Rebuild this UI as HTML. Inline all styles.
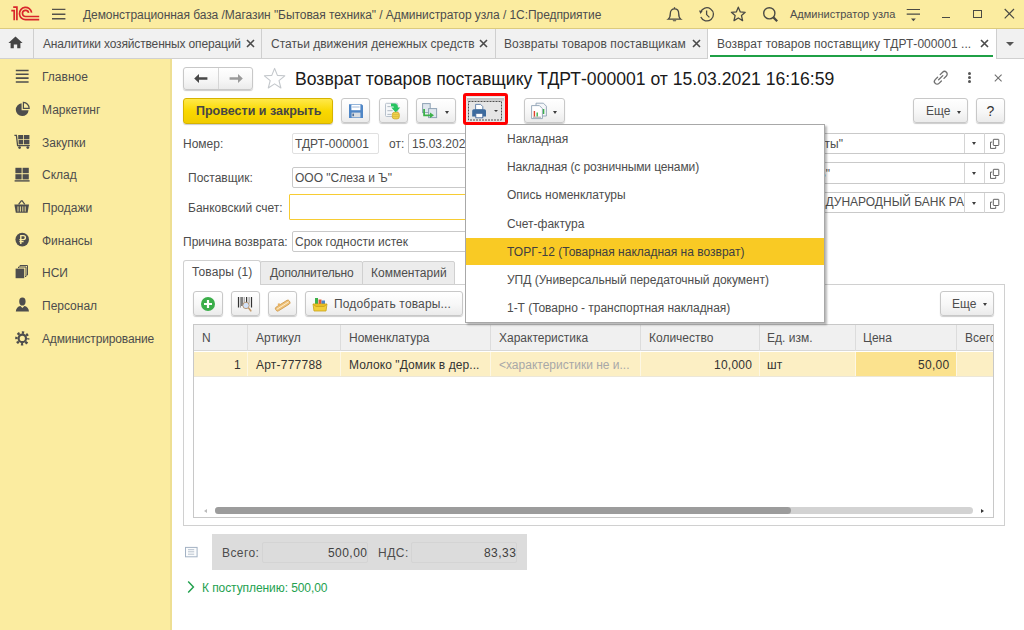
<!DOCTYPE html>
<html><head><meta charset="utf-8">
<style>
*{box-sizing:border-box;margin:0;padding:0}
html,body{width:1024px;height:630px;overflow:hidden;background:#fff;font-family:"Liberation Sans",sans-serif;color:#4d4d4d;font-size:12px}
.a{position:absolute}
.t{position:absolute;white-space:nowrap;line-height:1}
#top{left:0;top:0;width:1024px;height:28px;background:#fbeca0}
#topline{left:0;top:28px;width:1024px;height:1px;background:#dccb7e}
#tabs{left:0;top:29px;width:1024px;height:29px;background:#f1f1f1}
#tabsline{left:0;top:58px;width:1024px;height:1px;background:#d0d0d0}
#side{left:0;top:59px;width:170px;height:571px;background:#fbeca0}
#sideline{left:170px;top:59px;width:2px;height:571px;background:#eedf93}
.vsep{position:absolute;width:1px;background:#cfcfcf}
.btn{position:absolute;border:1px solid #c8c8c8;border-radius:3px;background:linear-gradient(#fff,#f7f7f7 55%,#ebebeb);box-shadow:0 1px 1px rgba(0,0,0,.2)}
.fld{position:absolute;border:1px solid #c9c9c9;border-radius:2px;background:#fff}
.dd{position:absolute;width:0;height:0;border-left:2.5px solid transparent;border-right:2.5px solid transparent;border-top:3px solid #3d3d3d}
.x{position:absolute}
</style></head>
<body>
<div id="top" class="a"></div>
<div id="topline" class="a"></div>
<div id="tabs" class="a"></div>
<div id="tabsline" class="a"></div>
<div id="side" class="a"></div>
<div id="sideline" class="a"></div>

<!-- ============ top bar ============ -->
<svg class="a" style="left:0;top:0" width="44" height="28" viewBox="0 0 44 28">
 <g fill="none" stroke="#d9262b" stroke-width="1.7">
  <path d="M11.3 10.6 H14.2 V20.2"/>
  <path d="M13.2 7.1 H16.9 V20.2"/>
  <path d="M31.6 12.6 A6.1 6.1 0 1 0 25.8 19.6 H39.2"/>
  <path d="M28.6 12.8 A3.1 3.1 0 1 0 25.8 16.5 H39.2"/>
 </g>
</svg>
<svg class="a" style="left:50px;top:6px" width="18" height="16" viewBox="0 0 18 16">
 <g stroke="#55524a" stroke-width="1.4"><path d="M2 3.4H15.4M2 8.3H15.4M2 12.7H15.4"/></g>
</svg>
<div class="t" style="left:83px;top:9px;font-size:12px;color:#4d4d4d;letter-spacing:-0.061px">Демонстрационная база /Магазин "Бытовая техника" / Администратор узла / 1С:Предприятие</div>

<!-- bell -->
<svg class="a" style="left:666px;top:6px" width="17" height="17" viewBox="0 0 17 17">
 <g fill="none" stroke="#4a4a44" stroke-width="1.3">
  <path d="M2.2 13.2 C3.8 12 4.3 10.5 4.3 7.6 C4.3 4.6 6 2.8 8.5 2.8 C11 2.8 12.7 4.6 12.7 7.6 C12.7 10.5 13.2 12 14.8 13.2 Z"/>
  <path d="M8.5 1.2 V2.8"/>
 </g>
 <path d="M6.6 14.3 H10.4 L9.8 15.3 H7.2Z" fill="#4a4a44"/>
</svg>
<!-- history -->
<svg class="a" style="left:698px;top:6px" width="17" height="17" viewBox="0 0 17 17">
 <g fill="none" stroke="#4a4a44" stroke-width="1.3">
  <path d="M2.6 6.2 A6.6 6.6 0 1 1 2.8 11"/>
  <path d="M8.6 4.6 V8.6 L11.4 11.4"/>
 </g>
 <path d="M1 4.4 L4.6 5 L2.4 8Z" fill="#4a4a44"/>
</svg>
<!-- star -->
<svg class="a" style="left:730px;top:6px" width="17" height="17" viewBox="0 0 17 17">
 <path d="M8.3 1.2 L10.3 5.9 L15.2 6.3 L11.5 9.6 L12.6 14.6 L8.3 12 L4 14.6 L5.1 9.6 L1.4 6.3 L6.3 5.9Z" fill="none" stroke="#4a4a44" stroke-width="1.3" stroke-linejoin="round"/>
</svg>
<!-- search -->
<svg class="a" style="left:762px;top:6px" width="17" height="17" viewBox="0 0 17 17">
 <circle cx="7.3" cy="7.3" r="5.6" fill="none" stroke="#4a4a44" stroke-width="1.4"/>
 <path d="M11.4 11.4 L15.2 15.2" stroke="#4a4a44" stroke-width="2.2"/>
</svg>
<div class="t" style="left:790px;top:9px;font-size:11px;color:#4d4d4d">Администратор узла</div>
<!-- filter -->
<svg class="a" style="left:905px;top:7px" width="17" height="16" viewBox="0 0 17 16">
 <g stroke="#4a4a44" stroke-width="1.2"><path d="M1.7 2.5H15M1.7 7.1H15"/></g>
 <path d="M6 11.6 H10.8 L8.4 14.2Z" fill="#4a4a44"/>
</svg>
<div class="a" style="left:942px;top:17px;width:8px;height:1.2px;background:#4a4a44"></div>
<div class="a" style="left:973.2px;top:9.9px;width:8.9px;height:8.4px;border:1.2px solid #4a4a44"></div>
<svg class="a" style="left:1003px;top:8px" width="13" height="13" viewBox="0 0 13 13">
 <path d="M1.7 1 L11 10.3 M11 1 L1.7 10.3" stroke="#4a4a44" stroke-width="1.2"/>
</svg>

<!-- ============ tabs ============ -->
<svg class="a" style="left:8px;top:36px" width="16" height="13" viewBox="0 0 16 13">
 <path d="M7.5 0.6 L14.6 7 H12.4 V12.2 H9.2 V8.6 H5.8 V12.2 H2.6 V7 H0.4Z" fill="#454545"/>
</svg>
<div class="vsep" style="left:33px;top:29px;height:29px"></div>
<div class="t" style="left:43px;top:38px;font-size:12px;letter-spacing:-0.152px">Аналитики хозяйственных операций</div>
<svg class="x" style="left:246px;top:39px" width="9" height="9" viewBox="0 0 9 9"><path d="M1 1L8 8M8 1L1 8" stroke="#4a4a4a" stroke-width="1.6"/></svg>
<div class="vsep" style="left:261px;top:29px;height:29px"></div>
<div class="t" style="left:271px;top:38px;font-size:12px">Статьи движения денежных средств</div>
<svg class="x" style="left:479px;top:39px" width="9" height="9" viewBox="0 0 9 9"><path d="M1 1L8 8M8 1L1 8" stroke="#4a4a4a" stroke-width="1.6"/></svg>
<div class="vsep" style="left:495px;top:29px;height:29px"></div>
<div class="t" style="left:504px;top:38px;font-size:12px;letter-spacing:0.081px">Возвраты товаров поставщикам</div>
<svg class="x" style="left:692px;top:39px" width="9" height="9" viewBox="0 0 9 9"><path d="M1 1L8 8M8 1L1 8" stroke="#4a4a4a" stroke-width="1.6"/></svg>
<div class="a" style="left:707px;top:29px;width:290px;height:30px;background:#fff;border-left:1px solid #cfcfcf;border-right:1px solid #cfcfcf"></div>
<div class="a" style="left:710px;top:55px;width:283px;height:2px;background:#1fa046"></div>
<div class="t" style="left:717px;top:38px;font-size:12px;letter-spacing:0.041px">Возврат товаров поставщику ТДРТ-000001 ...</div>
<svg class="x" style="left:980px;top:39px" width="9" height="9" viewBox="0 0 9 9"><path d="M1 1L8 8M8 1L1 8" stroke="#4a4a4a" stroke-width="1.6"/></svg>
<div class="dd" style="left:1006px;top:42px;border-left-width:4.5px;border-right-width:4.5px;border-top-width:4.5px;border-top-color:#555"></div>

<!-- ============ sidebar ============ -->
<svg class="a" style="left:14px;top:68px" width="17" height="17" viewBox="0 0 17 17">
 <g stroke="#4d4d4d" stroke-width="1.6"><path d="M1.8 2.5H14.6M1.8 6.3H14.6M1.8 10.1H14.6M1.8 14H14.6"/></g>
</svg>
<svg class="a" style="left:14px;top:101px" width="17" height="17" viewBox="0 0 17 17">
 <path d="M7.6 2.3 A6.4 6.4 0 1 0 14.6 9.2 H7.6Z" fill="#4d4d4d"/>
 <path d="M9.4 1.4 V7.4 H15.2 A6.2 6.2 0 0 0 9.4 1.4Z" fill="none" stroke="#4d4d4d" stroke-width="1.2"/>
</svg>
<svg class="a" style="left:13px;top:133px" width="18" height="17" viewBox="0 0 18 17">
 <path d="M1.4 2.4 H3.4 L4.6 12.6 H16.8" fill="none" stroke="#4d4d4d" stroke-width="1.3"/>
 <g fill="#4d4d4d"><rect x="5.2" y="2" width="5" height="4.2"/><rect x="11" y="2" width="5.4" height="4.2"/><rect x="5.6" y="6.9" width="4.6" height="4.4"/><rect x="11" y="6.9" width="5.4" height="4.4"/>
 <circle cx="6.6" cy="14.6" r="1.4"/><circle cx="14.8" cy="14.6" r="1.4"/></g>
</svg>
<svg class="a" style="left:14px;top:166px" width="17" height="17" viewBox="0 0 17 17">
 <g fill="#4d4d4d"><rect x="1.4" y="1.8" width="6.2" height="5.4"/><rect x="8.6" y="1.8" width="6.2" height="5.4"/><rect x="1.4" y="8.2" width="6.2" height="5.2"/><rect x="8.6" y="8.2" width="6.2" height="5.2"/><rect x="0.6" y="14.2" width="15" height="1.4"/></g>
</svg>
<svg class="a" style="left:13px;top:198px" width="18" height="17" viewBox="0 0 18 17">
 <path d="M5.6 6.4 L8.6 2.4 M11.8 6.4 L8.8 2.4" stroke="#4d4d4d" stroke-width="1.2" fill="none"/>
 <path d="M1.4 6.6 H16 L14.6 14.8 H2.8Z" fill="#4d4d4d"/>
 <g stroke="#fbeca0" stroke-width="0.9"><path d="M5 8.4V13.6M7.4 8.4V13.6M9.8 8.4V13.6M12.2 8.4V13.6"/></g>
</svg>
<svg class="a" style="left:14px;top:231px" width="17" height="17" viewBox="0 0 17 17">
 <circle cx="8.2" cy="8.6" r="6.8" fill="#4d4d4d"/>
 <path d="M6.8 13 V4.6 H9.4 A2 2 0 0 1 9.4 8.6 H5.4 M5.4 10.6 H9.6" fill="none" stroke="#fbeca0" stroke-width="1.4"/>
</svg>
<svg class="a" style="left:14px;top:263px" width="17" height="17" viewBox="0 0 17 17">
 <g fill="none" stroke="#4d4d4d" stroke-width="1"><path d="M6 3.5 V2.5 H13.5 V12 H12.5"/><path d="M4.5 5 V4 H12 V13.5 H11"/></g>
 <rect x="1.6" y="5.6" width="8.6" height="9.6" fill="#4d4d4d"/>
</svg>
<svg class="a" style="left:14px;top:296px" width="17" height="17" viewBox="0 0 17 17">
 <path d="M8.4 1.6 C6.2 1.6 5.2 3 5.2 5.4 C5.2 8 6.4 9.6 8.4 9.6 C10.4 9.6 11.6 8 11.6 5.4 C11.6 3 10.6 1.6 8.4 1.6Z M1.8 15.4 C2.2 12 3.8 10.6 6.4 10 L8.4 12 L10.4 10 C13 10.6 14.6 12 15 15.4Z" fill="#4d4d4d"/>
</svg>
<svg class="a" style="left:14px;top:330px" width="17" height="17" viewBox="0 0 17 17">
 <circle cx="8.3" cy="8.4" r="5.9" fill="none" stroke="#4d4d4d" stroke-width="2.4" stroke-dasharray="2.3 2.33" stroke-dashoffset="1.15"/>
 <circle cx="8.3" cy="8.4" r="3.7" fill="none" stroke="#4d4d4d" stroke-width="2.2"/>
</svg>
<div class="t" style="left:42px;top:71px">Главное</div>
<div class="t" style="left:42px;top:104px">Маркетинг</div>
<div class="t" style="left:42px;top:137px">Закупки</div>
<div class="t" style="left:42px;top:169px">Склад</div>
<div class="t" style="left:42px;top:202px">Продажи</div>
<div class="t" style="left:42px;top:235px">Финансы</div>
<div class="t" style="left:42px;top:267px">НСИ</div>
<div class="t" style="left:42px;top:300px">Персонал</div>
<div class="t" style="left:42px;top:333px;letter-spacing:-0.144px">Администрирование</div>

<!-- ============ form header ============ -->
<div class="btn" style="left:183px;top:67px;width:70px;height:23px"></div>
<div class="a" style="left:218px;top:68px;width:1px;height:21px;background:#d6d6d6"></div>
<svg class="a" style="left:193px;top:72px" width="16" height="13" viewBox="0 0 16 13">
 <path d="M1.2 6.5 L6 2 V5.3 H14.4 V7.7 H6 V11Z" fill="#474747"/>
</svg>
<svg class="a" style="left:228px;top:72px" width="16" height="13" viewBox="0 0 16 13">
 <path d="M14.8 6.5 L10 2 V5.3 H1.6 V7.7 H10 V11Z" fill="#9a9a9a"/>
</svg>
<svg class="a" style="left:262px;top:67px" width="25" height="23" viewBox="0 0 25 23">
 <path d="M12.6 1.4 L15.4 8.4 L22.8 8.8 L17 13.6 L18.9 21 L12.6 16.9 L6.3 21 L8.2 13.6 L2.4 8.8 L9.8 8.4Z" fill="none" stroke="#c4c8cc" stroke-width="1.1" stroke-linejoin="round"/>
</svg>
<div class="t" style="left:295px;top:71px;font-size:17.6px;color:#1a1a1a">Возврат товаров поставщику ТДРТ-000001 от 15.03.2021 16:16:59</div>

<!-- link / dots / close -->
<svg class="a" style="left:932px;top:69px" width="18" height="18" viewBox="0 0 18 18">
 <g fill="none" stroke="#707070" stroke-width="1.3" stroke-linecap="round">
  <path d="M8.2 5.6 L10.6 3.2 A2.6 2.6 0 0 1 14.4 7 L12 9.4"/>
  <path d="M9.4 12 L7 14.4 A2.6 2.6 0 0 1 3.2 10.6 L5.6 8.2"/>
  <path d="M6.6 10.8 L10.8 6.6"/>
 </g>
</svg>
<div class="a" style="left:967.5px;top:72px;width:3px;height:3px;border-radius:50%;background:#555"></div>
<div class="a" style="left:967.5px;top:75.8px;width:3px;height:3px;border-radius:50%;background:#555"></div>
<div class="a" style="left:967.5px;top:79.6px;width:3px;height:3px;border-radius:50%;background:#555"></div>
<svg class="a" style="left:993px;top:73px" width="10" height="10" viewBox="0 0 10 10"><path d="M1.8 1.6L8.6 8.4M8.6 1.6L1.8 8.4" stroke="#707070" stroke-width="1.1"/></svg>

<!-- ============ toolbar ============ -->
<div class="a" style="left:183px;top:98px;width:150px;height:26px;border:1px solid #d6b300;border-radius:3px;background:linear-gradient(#ffe94a,#f9d800 50%,#f1cc00);box-shadow:0 1px 1px rgba(0,0,0,.2)"></div>
<div class="t" style="left:196px;top:105px;font-size:12.5px;font-weight:bold;color:#464646">Провести и закрыть</div>

<div class="btn" style="left:341px;top:98px;width:29px;height:25px"></div>
<svg class="a" style="left:348px;top:103px" width="16" height="16" viewBox="0 0 16 16">
 <path d="M1 1.2 H13.6 L15 2.6 V15 H1Z" fill="#4f86c6"/>
 <rect x="3.4" y="1.8" width="9" height="5.4" fill="#fff"/>
 <rect x="4.2" y="3.6" width="7.4" height="0.8" fill="#8aa8d0"/>
 <rect x="3.6" y="9.6" width="8.8" height="4.8" fill="#d9dde2"/>
 <rect x="4.4" y="10.6" width="1.6" height="2.6" fill="#4f6e96"/>
</svg>

<div class="btn" style="left:379px;top:98px;width:29px;height:25px"></div>
<svg class="a" style="left:384px;top:102px" width="19" height="18" viewBox="0 0 19 18">
 <rect x="1.5" y="1.3" width="12.2" height="13.2" rx="1" fill="#f6f8fa" stroke="#b7c1cc" stroke-width="1"/>
 <g stroke="#a8b2bc" stroke-width="0.9"><path d="M3.4 4.6H6.6M3.4 8.7H8.6M3.4 12.4H7.6"/></g>
 <path d="M7 1.6 H10.5 C12.6 1.6 13.8 2.9 13.8 5.2 V5.6 H16.2 L11.7 10.6 L7.3 5.6 H9.9 V5.4 C9.9 4.7 9.6 4.4 8.8 4.4 H7Z" fill="#27c460"/>
 <rect x="8.3" y="10.3" width="7" height="6.6" rx="2.2" fill="#efd24c" stroke="#cfa52c" stroke-width="0.8"/>
 <path d="M8.6 12.6H15M8.6 14.6H15" stroke="#d9b43a" stroke-width="0.7"/>
</svg>

<div class="btn" style="left:416px;top:98px;width:40px;height:25px"></div>
<svg class="a" style="left:421px;top:102px" width="19" height="18" viewBox="0 0 19 18">
 <rect x="1.6" y="1.6" width="7.6" height="9" fill="#dfe7ee" stroke="#8ea2b4" stroke-width="1"/>
 <rect x="7.6" y="6.6" width="8" height="9" fill="#dfe7ee" stroke="#8ea2b4" stroke-width="1"/>
 <path d="M4 7 V12.4 H9 V10.4 L13 13.2 L9 16 V14.2 H2.2 V7Z" fill="#3cb14a"/>
</svg>
<div class="dd" style="left:445px;top:110.5px"></div>

<!-- pressed print button with red highlight -->

<div class="btn" style="left:524px;top:98px;width:41px;height:25px"></div>
<svg class="a" style="left:530px;top:102px" width="18" height="18" viewBox="0 0 18 18">
 <path d="M6 1.2 H13.4 L16.4 4.2 V14 H6Z" fill="#f4f6f8" stroke="#8ea2b4" stroke-width="0.9"/>
 <path d="M1.6 3.6 H9.4 L12.4 6.6 V16.6 H1.6Z" fill="#fff" stroke="#8ea2b4" stroke-width="0.9"/>
 <g stroke-width="1.4"><path d="M4.4 14.6V9" stroke="#e0402a"/><path d="M7.2 14.6V10.6" stroke="#3cb14a"/><path d="M13.6 12V7" stroke="#3cb14a"/></g>
 <path d="M3 15.2 H11" stroke="#8a8a8a" stroke-width="0.8"/>
</svg>
<div class="dd" style="left:553px;top:110.5px"></div>

<div class="btn" style="left:913px;top:98px;width:55px;height:25px"></div>
<div class="t" style="left:926px;top:105px;font-size:12px">Еще</div>
<div class="dd" style="left:956.5px;top:110.5px"></div>
<div class="btn" style="left:976px;top:98px;width:29px;height:25px"></div>
<div class="t" style="left:986.5px;top:104px;font-size:14px;color:#333">?</div>

<!-- ============ fields ============ -->
<div class="t" style="left:183px;top:138px">Номер:</div>
<div class="fld" style="left:292px;top:133px;width:87px;height:21px;border-color:#e0e0e0"></div>
<div class="t" style="left:295px;top:138px">ТДРТ-000001</div>
<div class="t" style="left:389px;top:138px">от:</div>
<div class="fld" style="left:408px;top:133px;width:80px;height:21px"></div>
<div class="t" style="left:412px;top:138px">15.03.2021</div>

<div class="t" style="left:188px;top:172px">Поставщик:</div>
<div class="fld" style="left:292px;top:167px;width:200px;height:21px"></div>
<div class="t" style="left:295px;top:172px">ООО "Слеза и Ъ"</div>

<div class="t" style="left:188px;top:202px">Банковский счет:</div>
<div class="a" style="left:289px;top:194px;width:200px;height:26px;border:1.7px solid #f7cc33;border-radius:1px"></div>

<div class="t" style="left:183px;top:236px">Причина возврата:</div>
<div class="fld" style="left:292px;top:231px;width:200px;height:21px"></div>
<div class="t" style="left:295px;top:236px">Срок годности истек</div>

<!-- right side fields -->
<div class="fld" style="left:700px;top:133px;width:305px;height:21px;border-radius:3px"></div>
<div class="a" style="left:964.2px;top:133px;width:1px;height:20px;background:#d4d4d4"></div>
<div class="a" style="left:984px;top:133px;width:1px;height:20px;background:#d4d4d4"></div>
<div class="t" style="right:181px;top:138px">ООО "Бытовые продукты"</div>
<div class="fld" style="left:700px;top:162px;width:305px;height:22px;border-radius:3px"></div>
<div class="a" style="left:964.2px;top:163px;width:1px;height:20px;background:#d4d4d4"></div>
<div class="a" style="left:984px;top:163px;width:1px;height:20px;background:#d4d4d4"></div>
<div class="t" style="right:194px;top:168px">ООО "Слеза и Ъ"</div>
<div class="fld" style="left:700px;top:192px;width:305px;height:21px;border-radius:3px"></div>
<div class="a" style="left:964.2px;top:193px;width:1px;height:20px;background:#d4d4d4"></div>
<div class="a" style="left:984px;top:193px;width:1px;height:20px;background:#d4d4d4"></div>
<div class="a" style="left:701px;top:193px;width:262.5px;height:19px;overflow:hidden"><div class="t" style="left:124.5px;top:3px">ДУНАРОДНЫЙ БАНК РАЗВИТИЯ</div></div>
<div class="dd" style="left:972px;top:142.2px"></div>
<div class="dd" style="left:972px;top:172.2px"></div>
<div class="dd" style="left:972px;top:202.2px"></div>
<svg class="a" style="left:988px;top:137px" width="12" height="13" viewBox="0 0 12 13"><g fill="none" stroke="#505050" stroke-width="0.9"><rect x="5.3" y="2.3" width="5.5" height="6.2" rx="0.6"/><path d="M4.2 5.1H2.5V11.4H7.7V9.4"/></g></svg>
<svg class="a" style="left:988px;top:167px" width="12" height="13" viewBox="0 0 12 13"><g fill="none" stroke="#505050" stroke-width="0.9"><rect x="5.3" y="2.3" width="5.5" height="6.2" rx="0.6"/><path d="M4.2 5.1H2.5V11.4H7.7V9.4"/></g></svg>
<svg class="a" style="left:988px;top:197px" width="12" height="13" viewBox="0 0 12 13"><g fill="none" stroke="#505050" stroke-width="0.9"><rect x="5.3" y="2.3" width="5.5" height="6.2" rx="0.6"/><path d="M4.2 5.1H2.5V11.4H7.7V9.4"/></g></svg>

<!-- ============ tab panel ============ -->
<div class="a" style="left:183px;top:284px;width:822px;height:242px;border:1px solid #d0d0d0;border-top:none"></div>
<div class="a" style="left:260px;top:284px;width:745px;height:1px;background:#d0d0d0"></div>
<div class="a" style="left:183px;top:260px;width:78px;height:25px;border:1px solid #d0d0d0;border-bottom:none;border-radius:3px 3px 0 0;background:#fff"></div>
<div class="t" style="left:192px;top:266px;font-size:12px;letter-spacing:0.12px">Товары (1)</div>
<div class="a" style="left:260px;top:261px;width:103px;height:24px;border:1px solid #d0d0d0;border-radius:2px 2px 0 0;background:#ececec"></div>
<div class="t" style="left:270px;top:267px;letter-spacing:-0.225px">Дополнительно</div>
<div class="a" style="left:362px;top:261px;width:93px;height:24px;border:1px solid #d0d0d0;border-radius:2px 2px 0 0;background:#ececec"></div>
<div class="t" style="left:371px;top:267px">Комментарий</div>

<div class="btn" style="left:193px;top:291px;width:30px;height:25px"></div>
<svg class="a" style="left:200px;top:296px" width="16" height="16" viewBox="0 0 16 16">
 <circle cx="8" cy="8" r="7" fill="#3bae4a"/>
 <path d="M8 4 V12 M4 8 H12" stroke="#fff" stroke-width="2.2"/>
</svg>
<div class="btn" style="left:231px;top:291px;width:29px;height:25px"></div>
<svg class="a" style="left:236px;top:295px" width="18" height="17" viewBox="0 0 18 17">
 <g stroke-width="1.2"><path d="M2.5 2V12.6M6 2V11M10.6 2V8.5M15.5 2V12.6" stroke="#333"/><path d="M4.4 2V12.6M8.2 2V9.5M13.1 2V8.5" stroke="#888" stroke-width="0.9"/></g>
 <path d="M12.2 12.6 L14.8 15.8" stroke="#c49a6a" stroke-width="1.6" stroke-linecap="round"/>
 <circle cx="10" cy="10.4" r="3.2" fill="#d2e2f8" stroke="#b89a7a" stroke-width="1"/>
</svg>
<div class="btn" style="left:268px;top:291px;width:29px;height:25px"></div>
<svg class="a" style="left:273px;top:295px" width="18" height="17" viewBox="0 0 18 17">
 <g transform="translate(9.7 10.6) rotate(-32)">
  <rect x="-8" y="-2.2" width="16" height="4.4" rx="1.6" fill="#eec27a" stroke="#d09a48" stroke-width="0.8"/>
  <path d="M-7 0 H7" stroke="#fff3d8" stroke-width="0.8"/>
  <rect x="-3.6" y="-4" width="2" height="2" fill="#e8b060"/>
 </g>
</svg>
<div class="btn" style="left:305px;top:291px;width:158px;height:25px"></div>
<svg class="a" style="left:312px;top:296px" width="17" height="16" viewBox="0 0 17 16">
 <rect x="3" y="2" width="3" height="6" fill="#3cb14a"/>
 <rect x="6.5" y="3.5" width="3" height="5" fill="#e05a3a"/>
 <rect x="9.5" y="4.5" width="3.5" height="4" fill="#4f86c6"/>
 <path d="M1 8 H15 L14 15 H2Z" fill="#f2cf3a" stroke="#c9a21a" stroke-width="0.8"/>
 <path d="M1 8 L4 10.5 H12 L15 8" fill="#e7bd22" stroke="#c9a21a" stroke-width="0.8"/>
</svg>
<div class="t" style="left:334px;top:298px;letter-spacing:0.161px">Подобрать товары...</div>

<div class="btn" style="left:940px;top:291px;width:54px;height:25px"></div>
<div class="t" style="left:952px;top:298px">Еще</div>
<div class="dd" style="left:982.5px;top:303px"></div>

<!-- table -->
<div class="a" style="left:193px;top:324px;width:801px;height:194px;border:1px solid #c8c8c8;overflow:hidden">
 <div class="a" style="left:0;top:0;width:800px;height:26px;background:#f0f0f0;border-bottom:1px solid #d8d8d8"></div>
 <div class="a" style="left:0;top:27px;width:800px;height:24px;background:#fcefc4"></div>
 <div class="a" style="left:0;top:51px;width:800px;height:1px;background:#ece7d8"></div>
 <div class="a" style="left:662px;top:27px;width:100px;height:24px;background:#fbe28e"></div>
 <div class="vsep" style="left:53px;top:0;height:26px;background:#dcdcdc"></div>
 <div class="vsep" style="left:146px;top:0;height:26px;background:#dcdcdc"></div>
 <div class="vsep" style="left:296px;top:0;height:26px;background:#dcdcdc"></div>
 <div class="vsep" style="left:446px;top:0;height:26px;background:#dcdcdc"></div>
 <div class="vsep" style="left:565px;top:0;height:26px;background:#dcdcdc"></div>
 <div class="vsep" style="left:661px;top:0;height:26px;background:#dcdcdc"></div>
 <div class="vsep" style="left:762px;top:0;height:26px;background:#dcdcdc"></div>
 <div class="vsep" style="left:53px;top:27px;height:24px;background:#fdf7e4"></div>
 <div class="vsep" style="left:146px;top:27px;height:24px;background:#fdf7e4"></div>
 <div class="vsep" style="left:296px;top:27px;height:24px;background:#fdf7e4"></div>
 <div class="vsep" style="left:446px;top:27px;height:24px;background:#fdf7e4"></div>
 <div class="vsep" style="left:565px;top:27px;height:24px;background:#fdf7e4"></div>
 <div class="vsep" style="left:661px;top:27px;height:24px;background:#fdf7e4"></div>
 <div class="vsep" style="left:762px;top:27px;height:24px;background:#fdf7e4"></div>
 <div class="t" style="left:8px;top:7px">N</div>
 <div class="t" style="left:62px;top:7px">Артикул</div>
 <div class="t" style="left:155px;top:7px">Номенклатура</div>
 <div class="t" style="left:305px;top:7px">Характеристика</div>
 <div class="t" style="left:455px;top:7px">Количество</div>
 <div class="t" style="left:573px;top:7px">Ед. изм.</div>
 <div class="t" style="left:669px;top:7px">Цена</div>
 <div class="t" style="left:771px;top:7px">Всего</div>
 <div class="t" style="left:40px;top:34px;color:#333">1</div>
 <div class="t" style="left:62px;top:34px;color:#333;letter-spacing:0.222px">Арт-777788</div>
 <div class="t" style="left:155px;top:34px;color:#333;letter-spacing:0.09px">Молоко "Домик в дер...</div>
 <div class="t" style="left:305px;top:34px;color:#a8a8a8">&lt;характеристики не и...</div>
 <div class="t" style="left:520px;top:34px;color:#333;letter-spacing:0.25px">10,000</div>
 <div class="t" style="left:573px;top:34px;color:#333">шт</div>
 <div class="t" style="left:724px;top:34px;color:#333;letter-spacing:0.3px">50,00</div>
 <!-- scrollbar -->
 <div class="a" style="left:10px;top:184px;width:0;height:0;border-top:2px solid transparent;border-bottom:2px solid transparent;border-right:3.5px solid #bbb"></div>
 <div class="a" style="left:21px;top:182px;width:758px;height:7px;border-radius:4px;background:#d3d3d3"></div>
 <div class="a" style="left:21px;top:182px;width:576px;height:7px;border-radius:4px;background:#9c9c9c"></div>
 <div class="a" style="left:787px;top:184px;width:0;height:0;border-top:2px solid transparent;border-bottom:2px solid transparent;border-left:3.5px solid #333"></div>
</div>

<!-- ============ footer ============ -->
<svg class="a" style="left:184px;top:546px" width="14" height="12" viewBox="0 0 14 12">
 <rect x="1.5" y="1.4" width="11.6" height="9.4" fill="#fbfcfd" stroke="#a3b2c4" stroke-width="1"/>
 <g stroke="#b0bbc8" stroke-width="0.9"><path d="M4 3.7H10.2M4 5.8H10.2M4 8.2H10.2"/></g>
</svg>
<div class="a" style="left:212px;top:534px;width:315px;height:36px;background:#dcdcdc"></div>
<div class="t" style="left:222px;top:547px;letter-spacing:0.420px">Всего:</div>
<div class="a" style="left:262px;top:542px;width:106px;height:21px;border:1px solid #d4d4d4;border-radius:2px"></div>
<div class="t" style="left:328px;top:547px;color:#404040;letter-spacing:0.45px">500,00</div>
<div class="t" style="left:378px;top:547px;letter-spacing:0.500px">НДС:</div>
<div class="a" style="left:411px;top:542px;width:106px;height:21px;border:1px solid #d4d4d4;border-radius:2px"></div>
<div class="t" style="left:484px;top:547px;color:#404040;letter-spacing:0.45px">83,33</div>

<svg class="a" style="left:186px;top:580px" width="10" height="14" viewBox="0 0 10 14"><path d="M2.2 1.6 L7.4 7 L2.2 12.4" fill="none" stroke="#23a14f" stroke-width="1.5"/></svg>
<div class="t" style="left:202px;top:582px;color:#23a14f;font-size:12px;letter-spacing:-0.075px">К поступлению: 500,00</div>

<!-- ============ dropdown menu ============ -->
<div class="a" style="left:465px;top:123.5px;width:360px;height:199.5px;background:#fff;border:1px solid #a8a8a8;box-shadow:2px 2px 2px rgba(0,0,0,.28)"></div>
<div class="a" style="left:466px;top:237.5px;width:357.5px;height:27.5px;background:#f9ca24"></div>
<div class="t" style="left:507px;top:133px">Накладная</div>
<div class="t" style="left:507px;top:161px;letter-spacing:-0.107px">Накладная (с розничными ценами)</div>
<div class="t" style="left:507px;top:189px">Опись номенклатуры</div>
<div class="t" style="left:507px;top:218px">Счет-фактура</div>
<div class="t" style="left:507px;top:246px;color:#404040">ТОРГ-12 (Товарная накладная на возврат)</div>
<div class="t" style="left:507px;top:274px">УПД (Универсальный передаточный документ)</div>
<div class="t" style="left:507px;top:302px;letter-spacing:-0.041px">1-Т (Товарно - транспортная накладная)</div>

<!-- pressed print button with red highlight -->
<div class="a" style="left:463.3px;top:93px;width:44.6px;height:32.1px;border:3.6px solid #ff0000;border-radius:3px;background:#e5e5e5"></div>
<div class="a" style="left:467px;top:96.7px;width:37px;height:1px;background:#fafafa"></div>
<div class="a" style="left:467px;top:97.7px;width:37px;height:3px;background:linear-gradient(#bdbdbd,#d2d2d2)"></div>
<svg class="a" style="left:466px;top:99px" width="40" height="24"><rect x="2.5" y="2.5" width="33" height="18.5" fill="none" stroke="#505050" stroke-width="1" stroke-dasharray="2 1"/></svg>
<svg class="a" style="left:471px;top:103px" width="17" height="16" viewBox="0 0 17 16">
 <path d="M4.6 1.4 H9.6 L11.8 3.6 V7 H4.6Z" fill="#fff" stroke="#5a7aa4" stroke-width="0.9"/>
 <path d="M1.2 7.8 A1.6 1.6 0 0 1 2.8 6.3 H13.4 A1.6 1.6 0 0 1 15 7.8 V13.4 H1.2Z" fill="#3d6b9e"/>
 <rect x="4.8" y="10.3" width="7" height="4.5" fill="#fff" stroke="#44689a" stroke-width="0.9"/>
</svg>
<div class="dd" style="left:493.5px;top:110px;border-top-width:2.5px"></div>

</body></html>
